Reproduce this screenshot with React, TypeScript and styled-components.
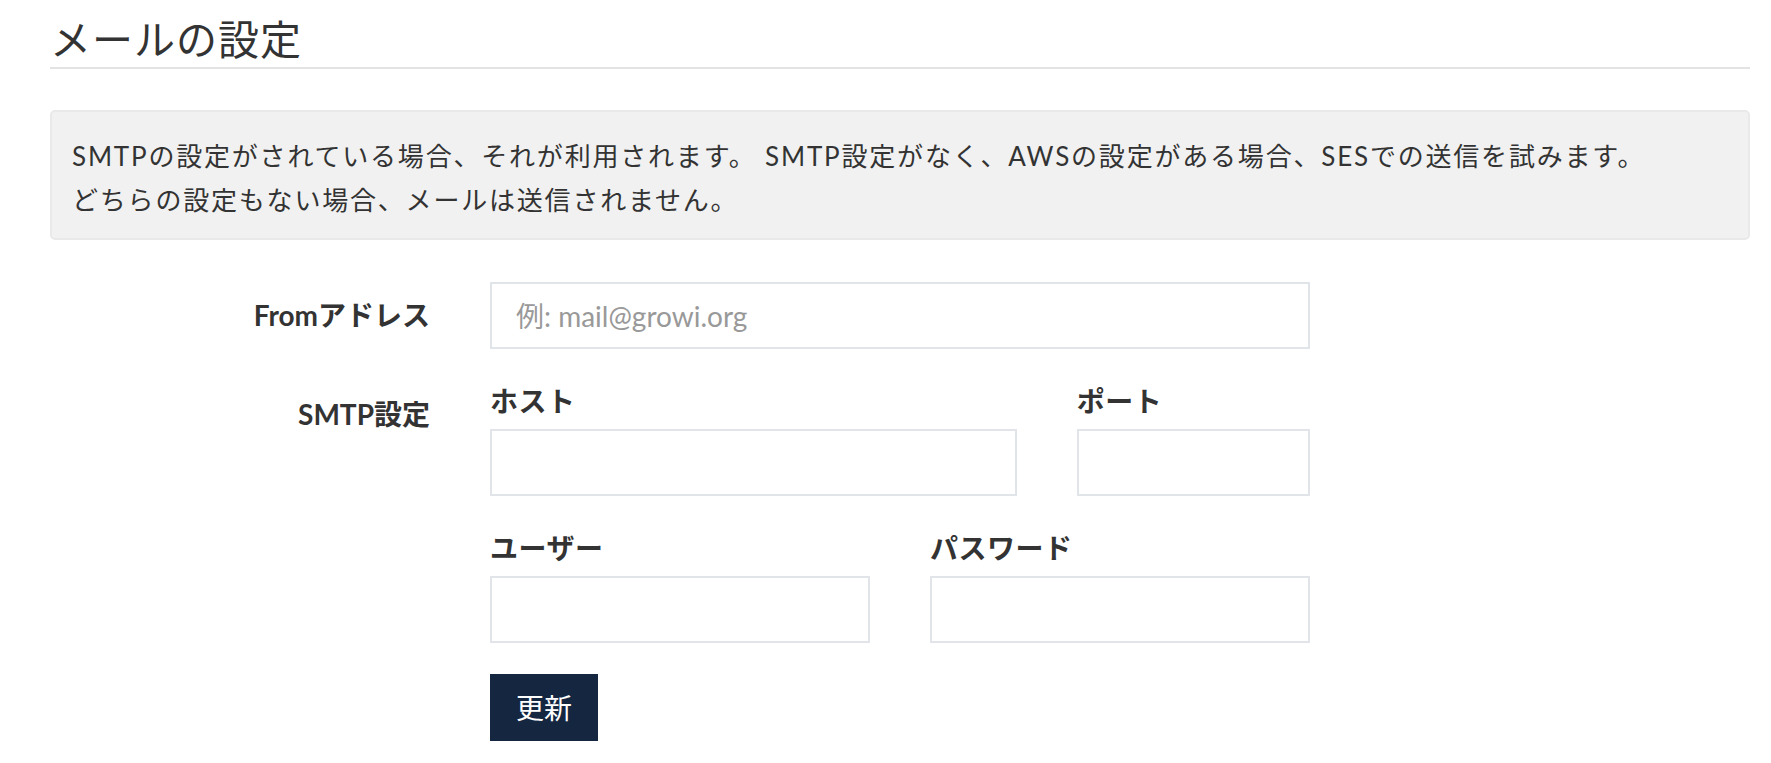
import React from "react";
import styled, { createGlobalStyle } from "styled-components";

const GlobalStyle = createGlobalStyle`
  html, body {
    margin: 0;
    padding: 0;
    background: #ffffff;
  }
  body {
    font-family: Lato, "Noto Sans CJK JP", sans-serif;
    color: #333333;
  }
  * {
    box-sizing: border-box;
  }
`;

const Page = styled.div`
  padding: 15px 21px 0 50px;
`;

const Title = styled.h2`
  margin: 0;
  font-size: 41px;
  font-weight: 400;
  line-height: 49px;
  letter-spacing: 1px;
  padding-bottom: 3px;
  border-bottom: 2px solid #e3e3e3;
  color: #333333;
`;

const Notice = styled.div`
  margin-top: 41px;
  background: #f1f1f1;
  border: 2px solid #e9e9e9;
  border-radius: 5px;
  padding: 22px 20px 16px;
  font-size: 26px;
  line-height: 44px;
  letter-spacing: 1.8px;
  color: #333333;
`;

const Form = styled.form`
  margin-top: 42px;
`;

const Row = styled.div<{ $mb?: number }>`
  display: flex;
  margin: 0 -30px ${(p) => p.$mb ?? 0}px;
`;

const Col = styled.div<{ $span: number; $offset?: number }>`
  flex: 0 0 ${(p) => (p.$span / 12) * 100}%;
  max-width: ${(p) => (p.$span / 12) * 100}%;
  margin-left: ${(p) => ((p.$offset ?? 0) / 12) * 100}%;
  padding: 0 30px;
`;

const RowLabel = styled.label`
  display: block;
  text-align: right;
  font-size: 28px;
  font-weight: 700;
  line-height: 40px;
  padding-top: 13px;
  color: #333333;
`;

const FieldLabel = styled.label`
  display: block;
  font-size: 28px;
  font-weight: 700;
  line-height: 40px;
  letter-spacing: 0.5px;
  margin-bottom: 8px;
  color: #333333;
`;

const TextInput = styled.input`
  display: block;
  width: 100%;
  height: 67px;
  border: 2px solid #e1e5e9;
  border-radius: 0;
  padding: 0 24px;
  font-family: inherit;
  font-size: 28px;
  color: #333333;
  background: #ffffff;
  outline: none;
  &::placeholder {
    color: #999999;
  }
`;

const SubmitButton = styled.button`
  height: 67px;
  padding: 0 26px;
  background: #152641;
  color: #ffffff;
  border: none;
  border-radius: 0;
  font-family: inherit;
  font-size: 28px;
  line-height: 40px;
  cursor: pointer;
`;

export default function App() {
  return (
    <>
      <GlobalStyle />
      <Page>
        <Title>メールの設定</Title>
        <Notice>
          SMTPの設定がされている場合、それが利用されます。 SMTP設定がなく、AWSの設定がある場合、SESでの送信を試みます。
          <br />
          どちらの設定もない場合、メールは送信されません。
        </Notice>
        <Form onSubmit={(e) => e.preventDefault()}>
          <Row $mb={32}>
            <Col $span={3}>
              <RowLabel htmlFor="from">Fromアドレス</RowLabel>
            </Col>
            <Col $span={6}>
              <TextInput id="from" type="text" placeholder="例: mail@growi.org" />
            </Col>
          </Row>
          <Row $mb={31}>
            <Col $span={3}>
              <RowLabel>SMTP設定</RowLabel>
            </Col>
            <Col $span={6}>
              <Row $mb={32}>
                <Col $span={8}>
                  <FieldLabel htmlFor="host">ホスト</FieldLabel>
                  <TextInput id="host" type="text" />
                </Col>
                <Col $span={4}>
                  <FieldLabel htmlFor="port">ポート</FieldLabel>
                  <TextInput id="port" type="text" />
                </Col>
              </Row>
              <Row>
                <Col $span={6}>
                  <FieldLabel htmlFor="user">ユーザー</FieldLabel>
                  <TextInput id="user" type="text" />
                </Col>
                <Col $span={6}>
                  <FieldLabel htmlFor="password">パスワード</FieldLabel>
                  <TextInput id="password" type="password" />
                </Col>
              </Row>
            </Col>
          </Row>
          <Row>
            <Col $span={6} $offset={3}>
              <SubmitButton type="submit">更新</SubmitButton>
            </Col>
          </Row>
        </Form>
      </Page>
    </>
  );
}
